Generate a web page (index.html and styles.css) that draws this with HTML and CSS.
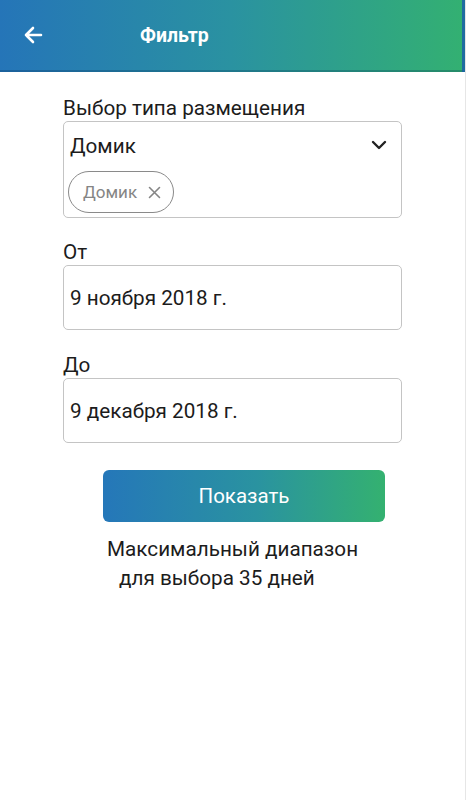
FILE: index.html
```html
<!DOCTYPE html>
<html lang="ru">
<head>
<meta charset="utf-8">
<link rel="stylesheet" href="styles.css">
</head>
<body>
<div class="page">
  <header class="topbar">
    <span class="back">
      <svg width="24" height="24" viewBox="0 0 24 24"><path d="M20 12H5M12 5l-7 7 7 7" fill="none" stroke="#fff" stroke-width="2.6" stroke-linecap="round" stroke-linejoin="round"/></svg>
    </span>
    <h1 class="title">Фильтр</h1>
  </header>
  <main class="form">
    <div class="field">
      <div class="label">Выбор типа размещения</div>
      <div class="box select">
        <div class="select-row">
          <span class="value">Домик</span>
          <svg class="chev" width="16" height="10" viewBox="0 0 16 10"><path d="M2 2l6 6 6-6" fill="none" stroke="#222" stroke-width="2.4" stroke-linecap="round" stroke-linejoin="round"/></svg>
        </div>
        <span class="chip">Домик <svg class="x" width="13" height="13" viewBox="0 0 13 13"><path d="M1.5 1.5l10 10M11.5 1.5l-10 10" stroke="#858585" stroke-width="1.6" stroke-linecap="round"/></svg></span>
      </div>
    </div>
    <div class="field from">
      <div class="label">От</div>
      <div class="box date"><span class="value">9 ноября 2018 г.</span></div>
    </div>
    <div class="field">
      <div class="label">До</div>
      <div class="box date"><span class="value">9 декабря 2018 г.</span></div>
    </div>
    <button class="show">Показать</button>
    <p class="note"><span class="l1">Максимальный диапазон</span><span class="l2">для выбора 35 дней</span></p>
  </main>
</div>
</body>
</html>
```
FILE: styles.css
```css
html, body { margin: 0; padding: 0; }
body {
  font-family: Roboto, "Noto Sans", sans-serif;
  background: #fff;
  color: #1c1c1c;
}
.page {
  width: 466px;
  height: 800px;
  border-right: 1px solid #e6e6e6;
  box-sizing: border-box;
}
.topbar {
  height: 72px;
  box-sizing: border-box;
  background: linear-gradient(90deg, #2575b8 0%, #2a92a1 50%, #33b072 100%);
  border-bottom: 2px solid rgba(0, 40, 80, 0.25);
  border-right: 3px solid rgba(0, 60, 30, 0.15);
  display: flex;
  align-items: center;
  padding-left: 21px;
}
.back { display: flex; width: 24px; height: 24px; }
.title {
  margin: 0 0 0 95px;
  font-size: 19.5px;
  font-weight: 700;
  color: #fff;
}
.form {
  display: flex;
  flex-direction: column;
  align-items: flex-start;
  padding: 24px 0 0 63px;
  width: 339px;
}
.field { width: 339px; margin-bottom: 22px; }
.field.from { margin-bottom: 23px; }
.label {
  font-size: 20.7px;
  line-height: 24px;
  color: #1c1c1c;
  margin-bottom: 1px;
}
.box {
  border: 1px solid #c4c4c4;
  border-radius: 5px;
  box-sizing: border-box;
}
.select { height: 97px; padding: 10px 14px 0 6px; }
.select-row {
  display: flex;
  justify-content: space-between;
  align-items: center;
  height: 28px;
}
.value { font-size: 20.7px; }
.chev { margin-top: -2px; }
.chip {
  display: inline-flex;
  align-items: center;
  margin-top: 11px;
  margin-left: -2px;
  height: 42px;
  box-sizing: border-box;
  padding: 0 12px 0 14px;
  border: 1px solid #8a8a8a;
  border-radius: 21px;
  color: #858585;
  font-size: 17px;
}
.x { margin-left: 11px; }
.date {
  height: 65px;
  display: flex;
  align-items: center;
  padding-left: 6px;
}
.show {
  display: block;
  margin: 5px 0 0 40px;
  width: 282px;
  height: 52px;
  border: none;
  border-radius: 6px;
  background: linear-gradient(90deg, #2577b9 0%, #2a93a0 55%, #34b170 100%);
  color: #fff;
  font-family: Roboto, sans-serif;
  font-size: 20.5px;
}
.note {
  margin: 13px 0 0 44px;
  font-size: 20.7px;
  line-height: 29px;
  color: #1c1c1c;
}
.l1, .l2 { display: block; }
.l2 { margin-left: 12px; }
```
